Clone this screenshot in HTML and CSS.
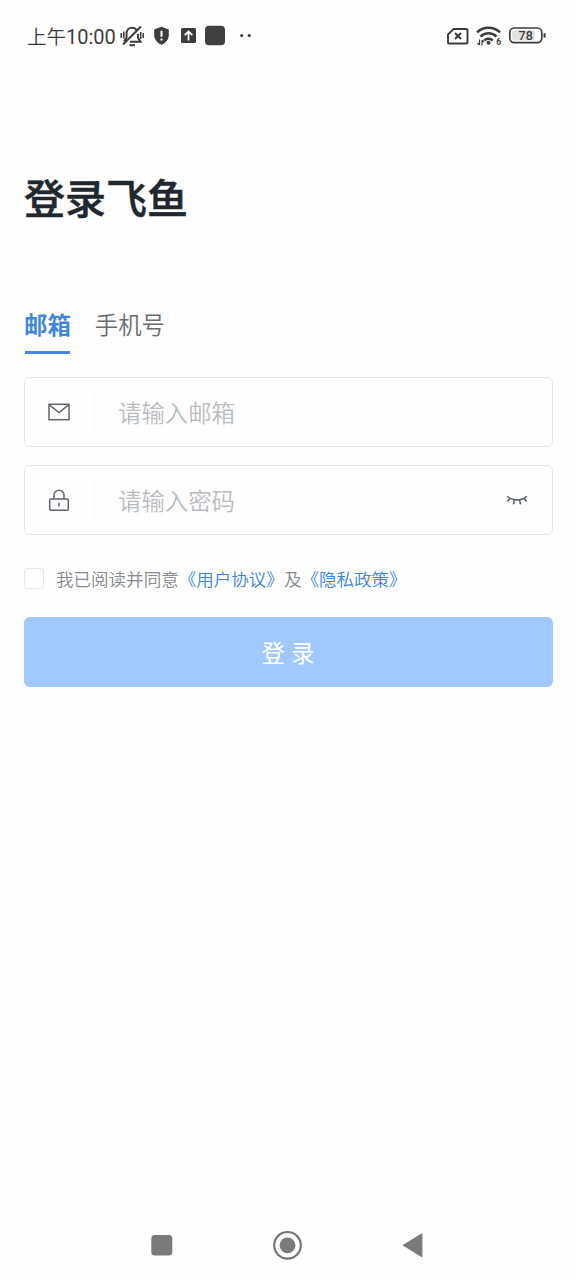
FILE: index.html
```html
<!DOCTYPE html>
<html lang="zh-CN">
<head>
<meta charset="utf-8">
<title>登录飞鱼</title>
<link rel="stylesheet" href="styles.css">
</head>
<body>
<div class="screen">
  <header class="status">
    <span class="time">上午<span class="digits">10:00</span></span>
    <svg class="notices" width="136" height="24" viewBox="0 0 136 24" fill="none">
      <g stroke="#3c3c3c" stroke-width="2">
        <path d="M4 17.300 6.500 14V9.500c0-3.500 2.300-5.700 5.500-5.700 2.200 0 3.800 1 4.700 2.600M18 10v4l2.500 3.800H10"/>
        <path d="M3 20.500 21 2.500"/>
        <path d="M9.500 21.200h5.500" stroke-width="2"/>
        <path d="M1.200 9v5M3.800 7.500v7M20.700 8v7M23.200 9v5" stroke-width="1.500"/>
      </g>
      <path d="M41.500 2.700 48.800 5.500v5.500c0 4.500-3 8-7.300 9.800-4.300-1.800-7.300-5.300-7.300-9.800V5.500z" fill="#3c3c3c"/>
      <path d="M41.500 6.700v6M41.500 14.400v2.200" stroke="#fff" stroke-width="2"/>
      <rect x="61" y="4" width="15" height="15" rx="1.500" fill="#3c3c3c"/>
      <path d="M68.500 16.500V7.700M64.700 11.200l3.800-3.800 3.800 3.800" stroke="#fff" stroke-width="1.800"/>
      <rect x="85" y="1.700" width="20" height="19.500" rx="4" fill="#404040"/>
      <circle cx="121.700" cy="11.500" r="1.600" fill="#3c3c3c"/>
      <circle cx="129.200" cy="11.500" r="1.600" fill="#3c3c3c"/>
    </svg>
    <svg class="signals" width="102" height="24" viewBox="0 0 102 24" fill="none">
      <path d="M7.500 5H20.500a1 1 0 0 1 1 1V18.500a1 1 0 0 1-1 1H3a1 1 0 0 1-1-1V10.500z" stroke="#3c3c3c" stroke-width="1.900"/>
      <path d="M9 9l6 6M15 9l-6 6" stroke="#3c3c3c" stroke-width="2"/>
      <g stroke="#3c3c3c" stroke-width="2.600">
        <path d="M31 8.400a16.500 16.500 0 0 1 23 0"/>
        <path d="M34.500 12.600a11.300 11.300 0 0 1 16 0"/>
        <path d="M38.300 16.500a6 6 0 0 1 8.400 0"/>
      </g>
      <circle cx="42.500" cy="18.800" r="2" fill="#3c3c3c"/>
      <path d="M33.500 15.500v5.500M31.500 19l2 2M36 21.500V16M38 18 36 16" stroke="#3c3c3c" stroke-width="1.200"/>
      <text x="50.200" y="21.400" class="wifi-gen">6</text>
      <rect x="63.800" y="4" width="32" height="14.600" rx="4.500" stroke="#3c3c3c" stroke-width="1.700"/>
      <path d="M68.500 6H88.500V16.600H68.500a2.500 2.500 0 0 1-2.500-2.500V8.500a2.500 2.500 0 0 1 2.500-2.500z" fill="#e3e3e3"/>
      <path d="M98.600 9.200v4.400" stroke="#3c3c3c" stroke-width="2"/>
      <text x="79.700" y="15.700" text-anchor="middle" class="charge">78</text>
    </svg>
  </header>

  <main class="login">
    <h1 class="title">登录飞鱼</h1>
    <nav class="tabs">
      <span class="tab tab-active">邮箱</span>
      <span class="tab">手机号</span>
    </nav>
    <label class="field">
      <span class="field-icon">
        <svg width="24" height="24" viewBox="0 0 24 24" fill="none" stroke="#5f656b" stroke-width="1.500">
          <rect x="2" y="4.300" width="20" height="15.400"/>
          <path d="M2.300 4.800 12 12.500l9.700-7.700"/>
        </svg>
      </span>
      <input class="input" type="text" placeholder="请输入邮箱">
    </label>
    <label class="field">
      <span class="field-icon">
        <svg width="24" height="24" viewBox="0 0 24 24" fill="none" stroke="#5f656b" stroke-width="1.500">
          <rect x="2.700" y="11" width="18.600" height="11.300" rx="1"/>
          <path d="M7 11V7.300a5 5 0 0 1 10 0V11M12 14.800v3.800"/>
        </svg>
      </span>
      <input class="input" type="password" placeholder="请输入密码">
      <svg class="eye" width="24" height="24" viewBox="0 0 24 24" fill="none" stroke="#5a6067" stroke-width="1.600" stroke-linecap="round">
        <path d="M2.700 8.500C7.500 13 16.500 13 21.300 8.500M5 10.400 2.700 13M9.400 12 8.600 15.700M14.600 12l.8 3.700M19 10.400l2.300 2.600"/>
      </svg>
    </label>
    <div class="agreement">
      <span class="checkbox"></span>
      <span>我已阅读并同意<a class="link">《用户协议》</a>及<a class="link">《隐私政策》</a></span>
    </div>
    <button class="submit" type="button">登 录</button>
  </main>

  <footer class="navbar">
    <svg width="280" height="32" viewBox="0 0 280 32" fill="none">
      <rect x="3.300" y="6" width="21" height="20.500" rx="3.500" fill="#7a7a7a"/>
      <circle cx="139.500" cy="16.300" r="13.300" stroke="#757575" stroke-width="2.200"/>
      <circle cx="139.500" cy="16.300" r="7.900" fill="#7a7a7a"/>
      <path d="M255.500 16.200 273.800 4.900V27.500z" fill="#7a7a7a" stroke="#7a7a7a" stroke-width="1.200" stroke-linejoin="round"/>
    </svg>
  </footer>
</div>
</body>
</html>
```
FILE: styles.css
```css
* {
  box-sizing: border-box;
}

body {
  margin: 0;
  background: #fefefe;
  font-family: "Noto Sans CJK SC", sans-serif;
}

.screen {
  display: flex;
  flex-direction: column;
  width: 576px;
  height: 1280px;
}

.status {
  display: flex;
  align-items: center;
  height: 72px;
  padding: 0 28px 0 27px;
}

.time {
  width: 93px;
  color: #3c3c3c;
  font-size: 19.5px;
  font-weight: 350;
  line-height: 24px;
  white-space: nowrap;
}

.digits {
  font-family: Roboto, sans-serif;
  font-size: 20px;
  font-weight: 400;
}

.notices {
  flex: none;
}

.signals {
  flex: none;
  margin-left: auto;
}

.wifi-gen {
  fill: #3c3c3c;
  font: 700 8.5px Roboto, sans-serif;
}

.charge {
  fill: #3c3c3c;
  font: 500 12.5px Roboto, sans-serif;
}

.login {
  display: flex;
  flex: 1;
  flex-direction: column;
  padding: 94px 23.5px 0;
}

.title {
  margin: 0;
  padding-left: 0.5px;
  color: #20272e;
  font-size: 41px;
  font-weight: 500;
  line-height: 60px;
  -webkit-text-stroke: 0.5px #20272e;
}

.tabs {
  display: flex;
  gap: 24px;
  margin-top: 73px;
  padding-left: 0.5px;
  height: 55px;
}

.tab {
  position: relative;
  height: 55px;
  color: #666c70;
  font-size: 23.4px;
  font-weight: 350;
  line-height: 50px;
}

.tab-active {
  color: #3e86e0;
  font-weight: 700;
}

.tab-active::after {
  position: absolute;
  right: 1px;
  bottom: 0;
  left: 1px;
  height: 3px;
  background: #3e86e0;
  content: "";
}

.field {
  display: flex;
  align-items: center;
  height: 70.5px;
  margin-top: 17.5px;
  border: 1.5px solid #e3e4e6;
  border-radius: 6px;
}

.tabs + .field {
  margin-top: 22.5px;
}

.field-icon {
  display: flex;
  align-items: center;
  justify-content: center;
  width: 70px;
  height: 46px;
  padding-right: 1px;
  border-right: 1px solid #f5f6f7;
}

.input {
  flex: 1;
  min-width: 0;
  height: 60px;
  padding: 0 23px 0 23.5px;
  border: 0;
  outline: 0;
  background: none;
  font: 350 23.4px "Noto Sans CJK SC", sans-serif;
}

.input::placeholder {
  color: #b9bcc0;
}

.eye {
  flex: none;
  margin-right: 23px;
}

.agreement {
  display: flex;
  align-items: center;
  gap: 12px;
  height: 26px;
  margin-top: 30.5px;
  color: #85898d;
  font-size: 17.55px;
  font-weight: 350;
  line-height: 26px;
}

.checkbox {
  width: 20.5px;
  height: 21px;
  border: 1px solid #e6e7e8;
  border-radius: 3px;
}

.link {
  color: #3785dc;
}

.submit {
  height: 70px;
  margin-top: 25px;
  padding: 0;
  border: 0;
  border-radius: 6px;
  background: #a0c9ff;
  color: #fff;
  font: 400 23.4px/68px "Noto Sans CJK SC", sans-serif;
  word-spacing: 1px;
}

.navbar {
  display: flex;
  justify-content: center;
  height: 51px;
}
```
